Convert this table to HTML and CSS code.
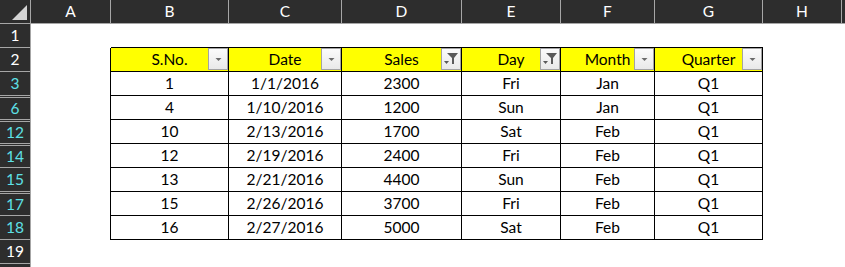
FILE: index.html
```html
<!DOCTYPE html>
<html>
<head>
<meta charset="utf-8">
<link rel="stylesheet" href="styles.css">
</head>
<body>
<div class="sheet">
  <!-- column headers -->
  <div class="corner"><svg width="30" height="23" viewBox="0 0 30 23"><polygon points="27,5 27,20 12,20" fill="#d4d4d4"/></svg></div>
  <div class="colh">A</div>
  <div class="colh">B</div>
  <div class="colh">C</div>
  <div class="colh">D</div>
  <div class="colh">E</div>
  <div class="colh">F</div>
  <div class="colh">G</div>
  <div class="colh">H</div>
  <div class="colh last"></div>

  <!-- row 1 -->
  <div class="rowh">1</div>
  <div class="cell"></div>
  <div class="cell top"></div>
  <div class="cell top"></div>
  <div class="cell top"></div>
  <div class="cell top"></div>
  <div class="cell top"></div>
  <div class="cell top"></div>
  <div class="cell"></div>
  <div class="cell"></div>

  <!-- row 2 header -->
  <div class="rowh">2</div>
  <div class="cell edge"></div>
  <div class="td th">S.No.<span class="btn"><svg width="20" height="22" viewBox="0 0 20 22"><polygon points="7.5,10 13.5,10 10.5,13" fill="#6b6b6b"/></svg></span></div>
  <div class="td th">Date<span class="btn"><svg width="20" height="22" viewBox="0 0 20 22"><polygon points="7.5,10 13.5,10 10.5,13" fill="#6b6b6b"/></svg></span></div>
  <div class="td th">Sales<span class="btn"><svg width="20" height="22" viewBox="0 0 20 22"><polygon points="6,5 17,5 13,10 13,16 11,16 11,10" fill="#5a5a5a"/><polygon points="3,13 8,13 5.5,16" fill="#5a5a5a"/></svg></span></div>
  <div class="td th">Day<span class="btn"><svg width="20" height="22" viewBox="0 0 20 22"><polygon points="6,5 17,5 13,10 13,16 11,16 11,10" fill="#5a5a5a"/><polygon points="3,13 8,13 5.5,16" fill="#5a5a5a"/></svg></span></div>
  <div class="td th">Month<span class="btn"><svg width="20" height="22" viewBox="0 0 20 22"><polygon points="7.5,10 13.5,10 10.5,13" fill="#6b6b6b"/></svg></span></div>
  <div class="td th">Quarter<span class="btn"><svg width="20" height="22" viewBox="0 0 20 22"><polygon points="7.5,10 13.5,10 10.5,13" fill="#6b6b6b"/></svg></span></div>
  <div class="cell"></div>
  <div class="cell"></div>

  <!-- row 3 -->
  <div class="rowh f">3</div>
  <div class="cell edge"></div>
  <div class="td">1</div><div class="td">1/1/2016</div><div class="td">2300</div><div class="td">Fri</div><div class="td">Jan</div><div class="td">Q1</div>
  <div class="cell"></div><div class="cell"></div>

  <!-- row 6 -->
  <div class="rowh f gap">6</div>
  <div class="cell edge"></div>
  <div class="td">4</div><div class="td">1/10/2016</div><div class="td">1200</div><div class="td">Sun</div><div class="td">Jan</div><div class="td">Q1</div>
  <div class="cell"></div><div class="cell"></div>

  <!-- row 12 -->
  <div class="rowh f gap">12</div>
  <div class="cell edge"></div>
  <div class="td">10</div><div class="td">2/13/2016</div><div class="td">1700</div><div class="td">Sat</div><div class="td">Feb</div><div class="td">Q1</div>
  <div class="cell"></div><div class="cell"></div>

  <!-- row 14 -->
  <div class="rowh f gap">14</div>
  <div class="cell edge"></div>
  <div class="td">12</div><div class="td">2/19/2016</div><div class="td">2400</div><div class="td">Fri</div><div class="td">Feb</div><div class="td">Q1</div>
  <div class="cell"></div><div class="cell"></div>

  <!-- row 15 -->
  <div class="rowh f">15</div>
  <div class="cell edge"></div>
  <div class="td">13</div><div class="td">2/21/2016</div><div class="td">4400</div><div class="td">Sun</div><div class="td">Feb</div><div class="td">Q1</div>
  <div class="cell"></div><div class="cell"></div>

  <!-- row 17 -->
  <div class="rowh f gap">17</div>
  <div class="cell edge"></div>
  <div class="td">15</div><div class="td">2/26/2016</div><div class="td">3700</div><div class="td">Fri</div><div class="td">Feb</div><div class="td">Q1</div>
  <div class="cell"></div><div class="cell"></div>

  <!-- row 18 -->
  <div class="rowh f">18</div>
  <div class="cell edge"></div>
  <div class="td">16</div><div class="td">2/27/2016</div><div class="td">5000</div><div class="td">Sat</div><div class="td">Feb</div><div class="td">Q1</div>
  <div class="cell"></div><div class="cell"></div>

  <!-- row 19 -->
  <div class="rowh">19</div>
  <div class="cell"></div><div class="cell"></div><div class="cell"></div><div class="cell"></div><div class="cell"></div><div class="cell"></div><div class="cell"></div><div class="cell"></div><div class="cell"></div>

  <!-- partial row 20 -->
  <div class="rowh"></div>
  <div class="cell"></div><div class="cell"></div><div class="cell"></div><div class="cell"></div><div class="cell"></div><div class="cell"></div><div class="cell"></div><div class="cell"></div><div class="cell"></div>
</div>
</body>
</html>
```
FILE: styles.css
```css
html, body {
  margin: 0;
  padding: 0;
  background: #ffffff;
  overflow: hidden;
}
.sheet {
  display: grid;
  grid-template-columns: 31px 80px 118px 113px 120px 99px 94px 108px 79px 1fr;
  grid-template-rows: repeat(11, 24px) 24px;
  width: 845px;
  height: 267px;
  overflow: hidden;
  font-family: Lato, "Open Sans", sans-serif;
  font-size: 15.5px;
  color: #000;
}
.sheet > div {
  box-sizing: border-box;
}
.corner {
  background: #2d2d2d;
  border-right: 1px solid #a6a6a6;
  border-bottom: 1px solid #a6a6a6;
}
.corner svg { display: block; }
.colh {
  background: #2d2d2d;
  color: #ffffff;
  border-right: 1px solid #a6a6a6;
  border-bottom: 1px solid #a6a6a6;
  display: flex;
  align-items: center;
  justify-content: center;
  line-height: 23px;
}
.colh.last { border-right: none; }
.rowh {
  background: #2d2d2d;
  color: #ffffff;
  border-right: 1px solid #a6a6a6;
  border-bottom: 1px solid #a6a6a6;
  display: flex;
  align-items: center;
  justify-content: center;
  line-height: 23px;
}
.rowh.f { color: #5ee0e6; }
.rowh.gap {
  box-shadow: inset 0 1px 0 #2d2d2d, inset 0 2px 0 #a6a6a6;
  padding-top: 2px;
}
.cell {
  background: #ffffff;
}
.cell.top { border-bottom: 1px solid #000; }
.cell.edge { border-right: 1px solid #000; }
.td {
  background: #ffffff;
  border-right: 1px solid #000;
  border-bottom: 1px solid #000;
  display: flex;
  align-items: center;
  justify-content: center;
  line-height: 23px;
}
.th {
  background: #ffff00;
  position: relative;
}
.btn {
  position: absolute;
  right: 0;
  top: 0;
  width: 20px;
  height: 22px;
  box-sizing: border-box;
  border: 1px solid #a3a3a3;
  background: linear-gradient(#fbfbfb, #e9e9e9);
}
.btn svg {
  display: block;
  position: absolute;
  left: -1px;
  top: -1px;
}
```
